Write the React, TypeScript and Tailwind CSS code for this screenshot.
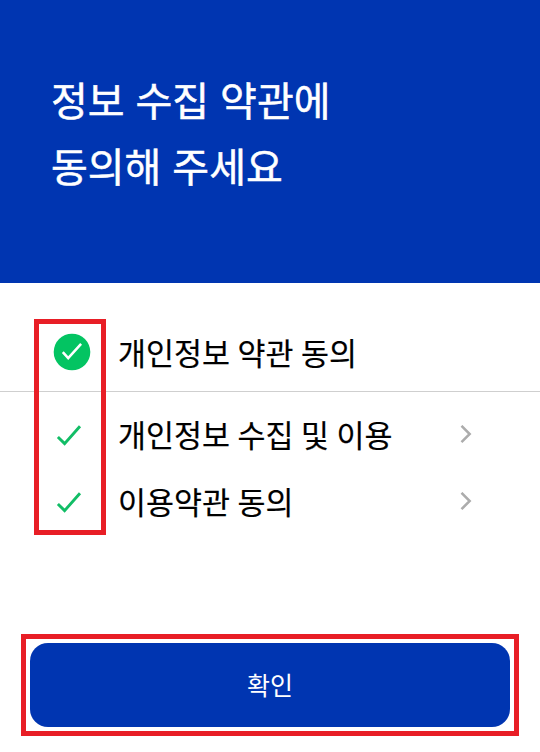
type Term = {
  id: string;
  label: string;
};

const terms: Term[] = [
  { id: "privacy", label: "개인정보 수집 및 이용" },
  { id: "service", label: "이용약관 동의" },
];

const CheckedCircle = () => (
  <svg width="38" height="38" viewBox="0 0 38 38" fill="none">
    <circle cx="19" cy="19" r="18.3" fill="#03c462" />
    <path d="M9.8 19.2L15.2 25.2L28.1 10.8" stroke="#fff" strokeWidth="2.5" />
  </svg>
);

const Check = () => (
  <svg width="38" height="38" viewBox="0 0 38 38" fill="none">
    <path d="M4.9 21L11.6 27.6L27 10.3" stroke="#12bd66" strokeWidth="2.9" />
  </svg>
);

const Chevron = () => (
  <svg width="14" height="20" viewBox="0 0 14 20" fill="none">
    <path d="M2.5 0.8L10.7 9L2.5 17.2" stroke="#acacac" strokeWidth="2.5" />
  </svg>
);

export default function App() {
  return (
    <main className="flex h-[752px] w-[540px] flex-col overflow-hidden bg-white font-['Noto_Sans_CJK_KR',sans-serif] text-black">
      <header className="h-[283px] bg-[#0035b1] pt-[66px] pl-[51px]">
        <h1 className="text-[40px] leading-[66px] font-normal text-white [word-spacing:2px] [-webkit-text-stroke:0.5px_white]">
          정보 수집 약관에
          <br />
          동의해 주세요
        </h1>
      </header>

      <section className="relative h-[351px]">
        <label className="flex h-[109px] items-center border-b border-[#cfcfcf] pt-[31px] pb-[1px] pl-[53px]">
          <CheckedCircle />
          <span className="ml-[27px] pt-[1px] text-[30.4px] [word-spacing:0.8px] [-webkit-text-stroke:0.2px_black]">
            개인정보 약관 동의
          </span>
        </label>

        <ul className="pt-[9px]">
          {terms.map((term) => (
            <li
              key={term.id}
              className="flex h-[67px] items-center pr-[67px] pl-[53px]"
            >
              <Check />
              <span className="ml-[27px] flex-1 text-[30.4px] [word-spacing:0.8px] [-webkit-text-stroke:0.2px_black]">
                {term.label}
              </span>
              <Chevron />
            </li>
          ))}
        </ul>

        {/* highlight around the check marks */}
        <div className="pointer-events-none absolute top-[36px] left-[34px] h-[216px] w-[72px] border-5 border-[#e81e26]" />
      </section>

      <div className="mx-[21px] border-5 border-[#e81e26] p-1">
        <button className="h-[84px] w-full rounded-[18px] bg-[#0035b1] text-[25px] text-white">
          확인
        </button>
      </div>
    </main>
  );
}
